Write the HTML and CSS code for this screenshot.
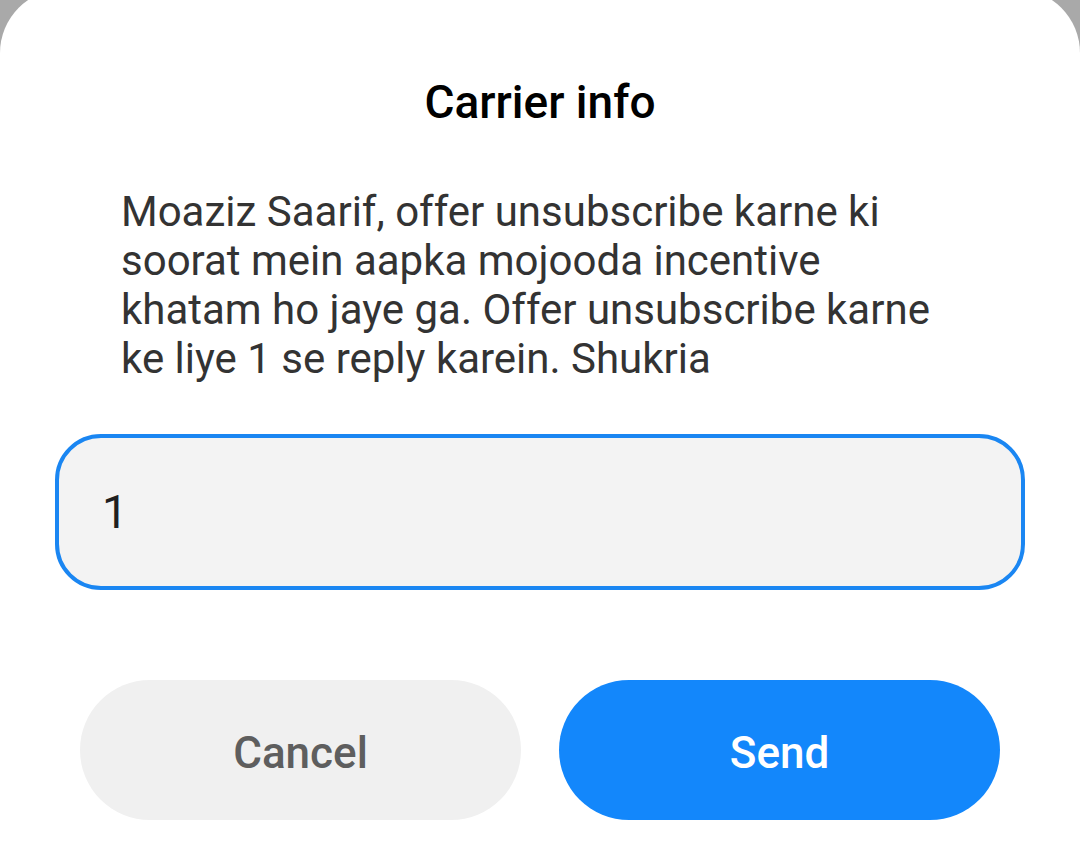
FILE: index.html
```html
<!DOCTYPE html>
<html lang="en">
<head>
<meta charset="utf-8">
<title>Carrier info</title>
<link rel="stylesheet" href="styles.css">
</head>
<body>
<div class="dialog">
  <h1 class="title">Carrier info</h1>
  <p class="message">Moaziz Saarif, offer unsubscribe karne ki soorat mein aapka mojooda incentive khatam ho jaye ga. Offer unsubscribe karne ke liye 1 se reply karein. Shukria</p>
  <div class="field"><span class="field-value">1</span></div>
  <div class="actions">
    <button class="btn btn-cancel">Cancel</button>
    <button class="btn btn-send">Send</button>
  </div>
</div>
</body>
</html>
```

FILE: styles.css
```css
html, body {
  margin: 0;
  padding: 0;
  height: 100%;
  overflow: hidden;
}
body {
  background: #a9a9a9;
  font-family: Roboto, "Noto Sans", sans-serif;
}
.dialog {
  margin-top: -11px;
  height: 873px;
  background: #ffffff;
  border-radius: 64px 64px 0 0;
  display: flex;
  flex-direction: column;
  box-sizing: border-box;
  padding-top: 86px;
}
.title {
  margin: 0;
  font-size: 46px;
  font-weight: 500;
  line-height: 54px;
  color: #000000;
  text-align: center;
}
.message {
  margin: 58px 0 0 121px;
  width: 830px;
  font-size: 42px;
  line-height: 49px;
  color: #333333;
}
.field {
  margin: 51px 55px 0 55px;
  height: 156px;
  box-sizing: border-box;
  border: 4px solid #1a86f2;
  border-radius: 46px;
  background: #f3f3f3;
  display: flex;
  align-items: center;
  padding-left: 43px;
}
.field-value {
  font-size: 46px;
  color: #1f1f1f;
}
.actions {
  margin: 90px 80px 0 80px;
  display: flex;
  gap: 38px;
}
.btn {
  flex: 1;
  height: 140px;
  border: none;
  border-radius: 70px;
  font-family: Roboto, "Noto Sans", sans-serif;
  font-size: 44px;
  font-weight: 500;
  padding: 5px 0 0 0;
}
.btn-cancel {
  background: #f0f0f0;
  color: #5e5e5e;
}
.btn-send {
  background: #1387fb;
  color: #ffffff;
}
```
